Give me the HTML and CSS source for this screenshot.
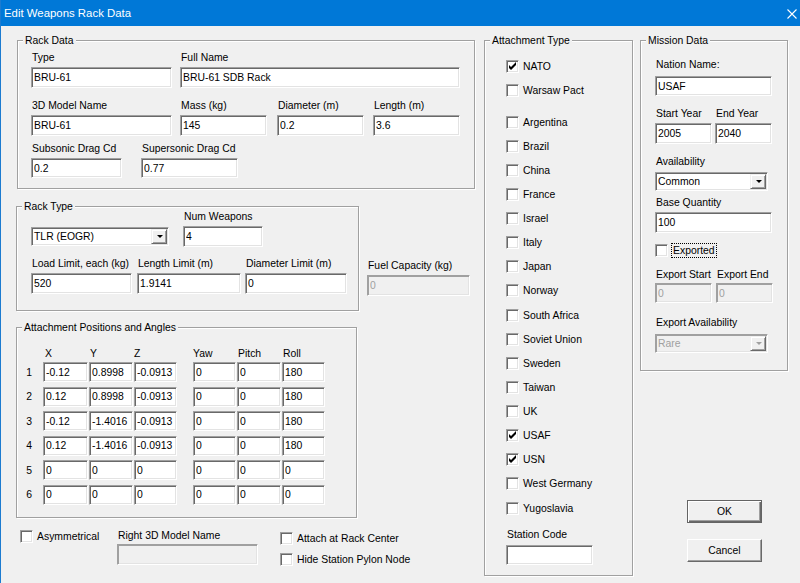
FILE: index.html
```html
<!DOCTYPE html>
<html>
<head>
<meta charset="utf-8">
<title>Edit Weapons Rack Data</title>
<link rel="stylesheet" href="styles.css">
</head>
<body>
<div class="window">
  <div class="titlebar">
    <span class="title">Edit Weapons Rack Data</span>
    <svg class="close" width="10" height="10" viewBox="0 0 10 10"><path d="M0.5 0.5L9.5 9.5M9.5 0.5L0.5 9.5" stroke="#fff" stroke-width="1.1" fill="none"/></svg>
  </div>
  <div class="main">
    <div class="left">
      <div class="group rack-data">
        <div class="gtitle">Rack Data</div>
        <div class="row rd-r1">
          <div class="field w-type"><label>Type</label><input class="edit" value="BRU-61"></div>
          <div class="field w-full"><label>Full Name</label><input class="edit" value="BRU-61 SDB Rack"></div>
        </div>
        <div class="row rd-r2">
          <div class="field w-model"><label>3D Model Name</label><input class="edit" value="BRU-61"></div>
          <div class="field w-mass"><label>Mass (kg)</label><input class="edit" value="145"></div>
          <div class="field w-diam"><label>Diameter (m)</label><input class="edit" value="0.2"></div>
          <div class="field w-len"><label>Length (m)</label><input class="edit" value="3.6"></div>
        </div>
        <div class="row rd-r3">
          <div class="field w-sub"><label>Subsonic Drag Cd</label><input class="edit h20" value="0.2"></div>
          <div class="field w-sup"><label>Supersonic Drag Cd</label><input class="edit h20" value="0.77"></div>
        </div>
      </div>

      <div class="rt-row">
        <div class="group rack-type">
          <div class="gtitle">Rack Type</div>
          <div class="row rt-a">
            <div class="combo w-rtype"><span class="ctext">TLR (EOGR)</span><span class="cbtn"><i class="arrow"></i></span></div>
            <div class="field w-num"><label>Num Weapons</label><input class="edit" value="4"></div>
          </div>
          <div class="row rt-b">
            <div class="field w-load"><label>Load Limit, each (kg)</label><input class="edit" value="520"></div>
            <div class="field w-llim"><label>Length Limit (m)</label><input class="edit" value="1.9141"></div>
            <div class="field w-dlim"><label>Diameter Limit (m)</label><input class="edit" value="0"></div>
          </div>
        </div>
        <div class="field fuel"><label>Fuel Capacity (kg)</label><input class="edit disabled" value="0" disabled></div>
      </div>

      <div class="group attach">
        <div class="gtitle">Attachment Positions and Angles</div>
        <div class="ap-grid ap-head">
          <span></span><span class="hx">X</span><span>Y</span><span class="hz">Z</span><span></span><span class="hz">Yaw</span><span>Pitch</span><span>Roll</span>
        </div>
        <div class="ap-grid ap-rows">
          <span class="rn">1</span><input class="edit" value="-0.12"><input class="edit" value="0.8998"><input class="edit" value="-0.0913"><span></span><input class="edit" value="0"><input class="edit" value="0"><input class="edit" value="180">
          <span class="rn">2</span><input class="edit" value="0.12"><input class="edit" value="0.8998"><input class="edit" value="-0.0913"><span></span><input class="edit" value="0"><input class="edit" value="0"><input class="edit" value="180">
          <span class="rn">3</span><input class="edit" value="-0.12"><input class="edit" value="-1.4016"><input class="edit" value="-0.0913"><span></span><input class="edit" value="0"><input class="edit" value="0"><input class="edit" value="180">
          <span class="rn">4</span><input class="edit" value="0.12"><input class="edit" value="-1.4016"><input class="edit" value="-0.0913"><span></span><input class="edit" value="0"><input class="edit" value="0"><input class="edit" value="180">
          <span class="rn">5</span><input class="edit" value="0"><input class="edit" value="0"><input class="edit" value="0"><span></span><input class="edit" value="0"><input class="edit" value="0"><input class="edit" value="0">
          <span class="rn">6</span><input class="edit" value="0"><input class="edit" value="0"><input class="edit" value="0"><span></span><input class="edit" value="0"><input class="edit" value="0"><input class="edit" value="0">
        </div>
      </div>

      <div class="bottom">
        <div class="check asym"><span class="cb"></span><span class="clabel">Asymmetrical</span></div>
        <div class="field w-r3d"><label>Right 3D Model Name</label><input class="edit disabled" value="" disabled></div>
        <div class="bchecks">
          <div class="check"><span class="cb"></span><span class="clabel">Attach at Rack Center</span></div>
          <div class="check"><span class="cb"></span><span class="clabel">Hide Station Pylon Node</span></div>
        </div>
      </div>
    </div>

    <div class="group atype">
      <div class="gtitle">Attachment Type</div>
      <div class="clist">
        <div class="crow"><span class="cb on"><svg width="13" height="13" viewBox="0 0 13 13"><polygon points="3,5 5,7 10,2 10,5 5,10 3,8" fill="#000"/></svg></span><span class="clabel">NATO</span></div>
        <div class="crow"><span class="cb"></span><span class="clabel">Warsaw Pact</span></div>
        <div class="crow sep"><span class="cb"></span><span class="clabel">Argentina</span></div>
        <div class="crow"><span class="cb"></span><span class="clabel">Brazil</span></div>
        <div class="crow"><span class="cb"></span><span class="clabel">China</span></div>
        <div class="crow"><span class="cb"></span><span class="clabel">France</span></div>
        <div class="crow"><span class="cb"></span><span class="clabel">Israel</span></div>
        <div class="crow"><span class="cb"></span><span class="clabel">Italy</span></div>
        <div class="crow"><span class="cb"></span><span class="clabel">Japan</span></div>
        <div class="crow"><span class="cb"></span><span class="clabel">Norway</span></div>
        <div class="crow"><span class="cb"></span><span class="clabel">South Africa</span></div>
        <div class="crow"><span class="cb"></span><span class="clabel">Soviet Union</span></div>
        <div class="crow"><span class="cb"></span><span class="clabel">Sweden</span></div>
        <div class="crow"><span class="cb"></span><span class="clabel">Taiwan</span></div>
        <div class="crow"><span class="cb"></span><span class="clabel">UK</span></div>
        <div class="crow"><span class="cb on"><svg width="13" height="13" viewBox="0 0 13 13"><polygon points="3,5 5,7 10,2 10,5 5,10 3,8" fill="#000"/></svg></span><span class="clabel">USAF</span></div>
        <div class="crow"><span class="cb on"><svg width="13" height="13" viewBox="0 0 13 13"><polygon points="3,5 5,7 10,2 10,5 5,10 3,8" fill="#000"/></svg></span><span class="clabel">USN</span></div>
        <div class="crow"><span class="cb"></span><span class="clabel">West Germany</span></div>
        <div class="crow"><span class="cb"></span><span class="clabel">Yugoslavia</span></div>
      </div>
      <div class="field station"><label>Station Code</label><input class="edit h20" value=""></div>
    </div>

    <div class="rcol">
      <div class="group mission">
        <div class="gtitle">Mission Data</div>
        <div class="field m-nation"><label>Nation Name:</label><input class="edit h20" value="USAF"></div>
        <div class="row m-years">
          <div class="field w-year"><label>Start Year</label><input class="edit" value="2005"></div>
          <div class="field w-year y-end"><label>End Year</label><input class="edit" value="2040"></div>
        </div>
        <div class="field m-avail"><label>Availability</label>
          <div class="combo w-avail"><span class="ctext">Common</span><span class="cbtn"><i class="arrow"></i></span></div>
        </div>
        <div class="field m-base"><label>Base Quantity</label><input class="edit" value="100"></div>
        <div class="check m-exp"><span class="cb"></span><span class="focus">Exported</span></div>
        <div class="row m-eyears">
          <div class="field w-year"><label>Export Start</label><input class="edit h20 disabled" value="0" disabled></div>
          <div class="field w-year ey-end"><label>Export End</label><input class="edit h20 disabled" value="0" disabled></div>
        </div>
        <div class="field m-eavail"><label>Export Availability</label>
          <div class="combo w-avail cdis"><span class="ctext">Rare</span><span class="cbtn"><i class="arrow"></i></span></div>
        </div>
      </div>
      <div class="buttons">
        <button class="btn default">OK</button>
        <button class="btn cancel">Cancel</button>
      </div>
    </div>
  </div>
</div>
</body>
</html>
```
FILE: styles.css
```css
* { box-sizing: border-box; }
html, body { margin: 0; padding: 0; }
body {
  width: 800px;
  height: 583px;
  overflow: hidden;
  background: #f0f0f0;
  font-family: "Liberation Sans", Arial, sans-serif;
  font-size: 10.4px;
  line-height: 13px;
  color: #000;
}
.window {
  width: 800px;
  height: 583px;
  background: #f0f0f0;
  border-left: 1px solid #1c7bd0;
  display: flex;
  flex-direction: column;
}
.titlebar {
  height: 26px;
  flex: none;
  background: #0078d7;
  color: #fff;
  display: flex;
  align-items: center;
  justify-content: space-between;
  padding: 0 3px 0 3px;
  font-size: 11.4px;
}
.close { display: block; margin-top: 1px; }

.main {
  display: flex;
  align-items: flex-start;
  padding: 14px 0 0 15px;
}
.left { width: 459px; display: flex; flex-direction: column; }

/* group boxes */
.group {
  --pl: 0px;
  border: 1px solid #a0a0a0;
  box-shadow: inset 1px 1px 0 #fff, 1px 1px 0 #fff;
  display: flex;
  flex-direction: column;
  padding-left: var(--pl);
}
.gtitle {
  margin: -7px 0 0 calc(5px - var(--pl));
  padding: 0 2px;
  background: #f0f0f0;
  width: fit-content;
  white-space: nowrap;
}
.row { display: flex; }
.field { display: flex; flex-direction: column; }
.field label { padding-left: 1px; white-space: nowrap; margin-bottom: 3px; }

/* edit controls */
.edit {
  display: block;
  width: 100%;
  height: 21px;
  margin: 0;
  padding: 0 0 0 2px;
  border: 1px solid;
  border-color: #a0a0a0 #fff #fff #a0a0a0;
  box-shadow: inset 1px 1px 0 #696969, inset -1px -1px 0 #e3e3e3;
  background: #fff;
  font: inherit;
  color: #000;
  outline: none;
  border-radius: 0;
}
.edit.h20 { height: 20px; }
.edit.disabled {
  background: #f0f0f0;
  color: #a0a0a0;
  box-shadow: inset 1px 1px 0 #a0a0a0, inset -1px -1px 0 #e3e3e3;
}

.combo {
  display: flex;
  align-items: stretch;
  height: 19px;
  padding: 1px;
  border: 1px solid;
  border-color: #a0a0a0 #fff #fff #a0a0a0;
  box-shadow: inset 1px 1px 0 #696969, inset -1px -1px 0 #e3e3e3;
  background: #fff;
}
.ctext { flex: 1; padding-left: 1px; display: flex; align-items: center; }
.cbtn {
  width: 16px;
  flex: none;
  background: #f0f0f0;
  border: 1px solid;
  border-color: #f0f0f0 #696969 #696969 #f0f0f0;
  box-shadow: inset 1px 1px 0 #fff, inset -1px -1px 0 #a0a0a0;
  display: flex;
  align-items: center;
  justify-content: center;
}
.arrow {
  width: 0;
  height: 0;
  border-left: 3px solid transparent;
  border-right: 3px solid transparent;
  border-top: 3px solid #000;
  margin-left: 1px;
}
.combo.cdis { background: #f0f0f0; color: #a0a0a0; box-shadow: inset 1px 1px 0 #a0a0a0, inset -1px -1px 0 #e3e3e3; }
.combo.cdis .arrow { border-top-color: #a0a0a0; }

/* checkboxes */
.check { display: flex; align-items: center; height: 13px; }
.cb {
  width: 13px;
  height: 13px;
  flex: none;
  border: 1px solid;
  border-color: #a0a0a0 #fff #fff #a0a0a0;
  box-shadow: inset 1px 1px 0 #696969, inset -1px -1px 0 #e3e3e3;
  background: #fff;
}
.cb svg { display: block; margin: -1px 0 0 -1px; }
.clabel { margin-left: 4px; white-space: nowrap; }

/* Rack Data */
.rack-data { --pl: 13px; margin-left: 1px; width: 458px; padding-bottom: 10px; }
.rd-r1 { margin-top: 4px; }
.rd-r2 { margin-top: 11px; }
.rd-r3 { margin-top: 6px; }
.w-type { width: 141px; }
.w-full { width: 280px; margin-left: 8px; }
.w-model { width: 141px; }
.w-mass { width: 87px; margin-left: 8px; }
.w-diam { width: 87px; margin-left: 10px; }
.w-len { width: 87px; margin-left: 9px; }
.w-sub { width: 91px; }
.w-sup { width: 97px; margin-left: 19px; }

/* Rack Type */
.rt-row { display: flex; align-items: flex-end; margin-top: 17px; }
.rack-type { --pl: 14px; width: 343px; padding-bottom: 16px; }
.rt-a { margin-top: -3px; align-items: flex-end; }
.w-rtype { width: 138px; margin-bottom: 1px; }
.w-num { width: 80px; margin-left: 14px; }
.rt-b { margin-top: 10px; }
.w-load { width: 101px; }
.w-llim { width: 104px; margin-left: 5px; }
.w-dlim { width: 102px; margin-left: 4px; }
.fuel { width: 103px; margin-left: 8px; margin-bottom: 15px; }

/* Attachment positions */
.attach { width: 341px; margin-top: 16px; padding-bottom: 12px; }
.ap-grid {
  display: grid;
  grid-template-columns: 25px 45px 44px 43px 14px 43px 44px 43px;
  column-gap: 1px;
}
.ap-head { margin-top: 13px; }
.ap-head span { padding-left: 1px; }
.ap-head .hx { padding-left: 2px; }
.ap-head .hz { padding-left: 0; }
.ap-rows { margin-top: 2px; grid-auto-rows: 20px; row-gap: 4.6px; }
.ap-rows .edit { height: 20px; }
.rn { display: flex; align-items: center; justify-content: flex-end; padding-right: 10px; }

/* bottom row */
.bottom { display: flex; margin-top: 11px; align-items: flex-start; }
.asym { width: 97px; margin: 1px 0 0 4px; }
.w-r3d { width: 141px; }
.w-r3d label { margin-bottom: 2px; }
.bchecks { display: flex; flex-direction: column; gap: 8px; margin: 3px 0 0 22px; }

/* Attachment type */
.atype { --pl: 21px; width: 149px; margin-left: 9px; padding-bottom: 10px; }
.clist { margin-top: 7px; }
.crow { display: flex; align-items: center; height: 24.125px; }
.crow.sep { margin-top: 7.75px; }
.station { margin-top: 8px; width: 87px; }
.station label { margin-bottom: 4px; }

/* Mission data */
.rcol { display: flex; flex-direction: column; margin-left: 7px; }
.mission { --pl: 14px; width: 148px; padding-bottom: 17px; }
.m-nation { margin-top: 11px; width: 117px; }
.m-nation label { margin-bottom: 5px; }
.m-years { margin-top: 11px; }
.w-year { width: 57px; }
.y-end { margin-left: 3px; }
.m-avail { margin-top: 11px; }
.m-avail label { margin-bottom: 4px; }
.w-avail { width: 113px; }
.m-base { margin-top: 5px; width: 117px; }
.m-exp { margin-top: 11px; }
.focus { margin-left: 3px; padding: 0 1px; border: 1px dotted #000; white-space: nowrap; }
.m-eyears { margin-top: 11px; }
.m-eyears label { margin-bottom: 2px; }
.ey-end { margin-left: 4px; }
.m-eavail { margin-top: 13px; }
.m-eavail label { margin-bottom: 5px; }

.buttons { display: flex; flex-direction: column; gap: 16px; margin: 129px 0 0 47px; }
.btn {
  width: 75px;
  height: 23px;
  margin: 0;
  padding: 0;
  font: inherit;
  color: #000;
  background: #f0f0f0;
  border: 1px solid;
  border-color: #fff #696969 #696969 #fff;
  box-shadow: inset -1px -1px 0 #a0a0a0;
  border-radius: 0;
}
.btn.default {
  border-color: #646464;
  box-shadow: inset 1px 1px 0 #fff, inset -1px -1px 0 #696969, inset -2px -2px 0 #a0a0a0;
}
```
